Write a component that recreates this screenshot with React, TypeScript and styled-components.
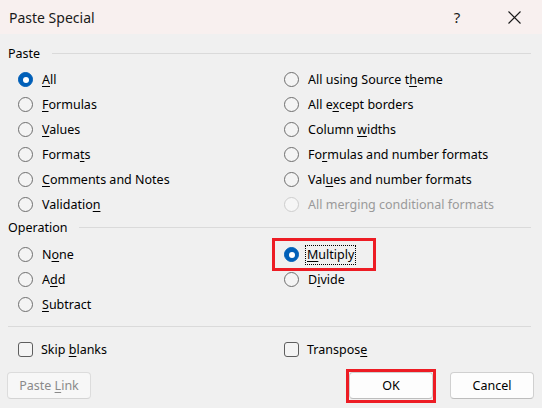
import React from "react";
import styled, { createGlobalStyle } from "styled-components";

const GlobalStyle = createGlobalStyle`
  html, body { margin: 0; padding: 0; background: #f0f0f0; }
  body { font-family: "Noto Sans", "Open Sans", sans-serif; }
  * { box-sizing: border-box; }
`;

const Dialog = styled.div`
  width: 542px;
  height: 408px;
  background: #f0f0f0;
  display: flex;
  flex-direction: column;
  font-family: "Noto Sans", "Open Sans", sans-serif;
  font-size: 12.5px;
  color: #000;
  overflow: hidden;
`;

const TitleBar = styled.div`
  height: 34px;
  flex: none;
  background: #f8f0ef;
  display: flex;
  align-items: center;
  padding-left: 9px;
`;

const Title = styled.div`
  font-size: 14px;
  color: #1a1a1a;
  flex: 1;
`;

const HelpButton = styled.div`
  width: 30px;
  height: 34px;
  margin-right: 20px;
  display: flex;
  align-items: center;
  justify-content: center;
  font-size: 15px;
  color: #1a1a1a;
`;

const CloseButton = styled.div`
  width: 44px;
  height: 34px;
  margin-right: 6px;
  display: flex;
  align-items: center;
  justify-content: center;
`;

const Body = styled.div`
  padding: 7px 8px 0 8px;
  display: flex;
  flex-direction: column;
`;

const SectionHeader = styled.div<{ $top?: number }>`
  height: 24px;
  margin-top: ${(p) => p.$top ?? 0}px;
  display: flex;
  align-items: center;
  gap: 12px;
  &::after {
    content: "";
    flex: 1;
    height: 1px;
    background: #dadada;
    margin-right: 3px;
  }
`;

const OptionGrid = styled.div<{ $rows: number; $pad: number }>`
  display: grid;
  grid-template-columns: 266px 1fr;
  grid-template-rows: repeat(${(p) => p.$rows}, 25px);
  grid-auto-flow: column;
  padding-left: 10px;
  padding-top: ${(p) => p.$pad}px;
`;

const OptionItem = styled.label`
  position: relative;
  display: flex;
  align-items: center;
  gap: 9px;
  white-space: nowrap;
`;

const RadioCircle = styled.span<{ $checked?: boolean; $disabled?: boolean }>`
  width: 15px;
  height: 15px;
  flex: none;
  border-radius: 50%;
  position: relative;
  border: 1px solid
    ${(p) => (p.$checked ? "#005fb8" : p.$disabled ? "#cdcdcd" : "#6e6e6e")};
  background: ${(p) => (p.$checked ? "#005fb8" : p.$disabled ? "#f6f6f6" : "#f4f4f4")};
  &::after {
    content: "";
    display: ${(p) => (p.$checked ? "block" : "none")};
    position: absolute;
    left: 50%;
    top: 50%;
    width: 6px;
    height: 6px;
    margin: -3px 0 0 -3px;
    border-radius: 50%;
    background: #fff;
  }
`;

const OptionText = styled.span<{ $disabled?: boolean }>`
  color: ${(p) => (p.$disabled ? "#9a9a9a" : "#000")};
`;

const FocusText = styled.span`
  margin-left: -3px;
  padding: 0 1px;
  line-height: 18px;
  border: 1px dotted #000;
`;

const Key = styled.span`
  text-decoration: underline;
  text-underline-offset: 2px;
  text-decoration-thickness: 1px;
`;

const Highlight = styled.span`
  position: absolute;
  left: -12px;
  top: -4px;
  width: 104px;
  height: 33px;
  border: 3px solid #ed1c24;
  pointer-events: none;
`;

const Separator = styled.div`
  height: 1px;
  background: #dadada;
  margin: 9px 3px 0 0;
`;

const CheckGrid = styled.div`
  display: grid;
  grid-template-columns: 266px 1fr;
  height: 25px;
  margin-top: 10px;
  padding-left: 10px;
`;

const CheckItem = styled.label`
  display: flex;
  align-items: center;
  gap: 8px;
`;

const CheckBox = styled.span`
  width: 15px;
  height: 15px;
  flex: none;
  border: 1px solid #5e5e5e;
  border-radius: 3px;
  background: #f4f4f4;
`;

const Footer = styled.div`
  display: flex;
  align-items: center;
  padding: 0 8px 0 7px;
  margin-top: 10px;
`;

const Button = styled.div<{ $disabled?: boolean; $last?: boolean }>`
  position: relative;
  width: 84px;
  height: 27px;
  display: flex;
  align-items: center;
  justify-content: center;
  border-radius: 4px;
  border: 1px solid ${(p) => (p.$disabled ? "#dcdcdc" : "#d0d0d0")};
  border-bottom-color: ${(p) => (p.$disabled ? "#d4d4d4" : "#bdbdbd")};
  background: ${(p) => (p.$disabled ? "#f7f7f7" : "#fdfdfd")};
  color: ${(p) => (p.$disabled ? "#8a8a8a" : "#000")};
  margin-left: ${(p) => (p.$last ? "17px" : "0")};
`;

const Spacer = styled.div`
  flex: 1;
`;

const ButtonHighlight = styled.span`
  position: absolute;
  inset: -4px -4px -5px -4px;
  border: 3px solid #ed1c24;
`;

type Opt = {
  pre: string;
  key?: string;
  post?: string;
  checked?: boolean;
  disabled?: boolean;
  focused?: boolean;
};

const pasteOptions: Opt[] = [
  { pre: "", key: "A", post: "ll", checked: true },
  { pre: "", key: "F", post: "ormulas" },
  { pre: "", key: "V", post: "alues" },
  { pre: "Forma", key: "t", post: "s" },
  { pre: "", key: "C", post: "omments and Notes" },
  { pre: "Validatio", key: "n", post: "" },
  { pre: "All using Source t", key: "h", post: "eme" },
  { pre: "All e", key: "x", post: "cept borders" },
  { pre: "Column ", key: "w", post: "idths" },
  { pre: "Fo", key: "r", post: "mulas and number formats" },
  { pre: "Val", key: "u", post: "es and number formats" },
  { pre: "All merging conditional formats", disabled: true },
];

const operationOptions: Opt[] = [
  { pre: "N", key: "o", post: "ne" },
  { pre: "A", key: "d", post: "d" },
  { pre: "", key: "S", post: "ubtract" },
  { pre: "", key: "M", post: "ultiply", checked: true, focused: true },
  { pre: "D", key: "i", post: "vide" },
];

const Label: React.FC<{ o: Opt }> = ({ o }) => (
  <>
    {o.pre}
    {o.key && <Key>{o.key}</Key>}
    {o.post}
  </>
);

const Radio: React.FC<{ o: Opt }> = ({ o }) => (
  <OptionItem>
    <RadioCircle $checked={o.checked} $disabled={o.disabled} />
    {o.focused ? (
      <FocusText>
        <Label o={o} />
      </FocusText>
    ) : (
      <OptionText $disabled={o.disabled}>
        <Label o={o} />
      </OptionText>
    )}
    {o.focused && <Highlight />}
  </OptionItem>
);

const CloseIcon = () => (
  <svg width="13" height="13" viewBox="0 0 13 13">
    <path d="M0.5 0.5 L12.5 12.5 M12.5 0.5 L0.5 12.5" stroke="#1a1a1a" strokeWidth="1.1" fill="none" />
  </svg>
);

export default function App() {
  return (
    <>
      <GlobalStyle />
      <Dialog>
        <TitleBar>
          <Title>Paste Special</Title>
          <HelpButton>?</HelpButton>
          <CloseButton>
            <CloseIcon />
          </CloseButton>
        </TitleBar>
        <Body>
          <SectionHeader>Paste</SectionHeader>
          <OptionGrid $rows={6} $pad={2}>
            {pasteOptions.map((o, i) => (
              <Radio key={i} o={o} />
            ))}
          </OptionGrid>
          <SectionHeader $top={-2}>Operation</SectionHeader>
          <OptionGrid $rows={3} $pad={3}>
            {operationOptions.map((o, i) => (
              <Radio key={i} o={o} />
            ))}
          </OptionGrid>
          <Separator />
          <CheckGrid>
            <CheckItem>
              <CheckBox />
              <span>
                Skip <Key>b</Key>lanks
              </span>
            </CheckItem>
            <CheckItem>
              <CheckBox />
              <span>
                Transpos<Key>e</Key>
              </span>
            </CheckItem>
          </CheckGrid>
        </Body>
        <Footer>
          <Button $disabled>
            Paste&nbsp;<Key>L</Key>ink
          </Button>
          <Spacer />
          <Button>
            OK
            <ButtonHighlight />
          </Button>
          <Button $last>Cancel</Button>
        </Footer>
      </Dialog>
    </>
  );
}
